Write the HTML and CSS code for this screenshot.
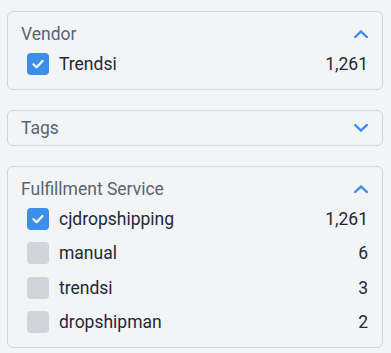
FILE: index.html
```html
<!DOCTYPE html>
<html lang="en">
<head>
    <meta charset="UTF-8">
    <meta name="viewport" content="width=device-width, initial-scale=1.0">
    <title>Filters</title>
    <link rel="stylesheet" href="styles.css">
</head>
<body>
    <div class="filters">
        <div class="card open">
            <div class="card-header">
                <span class="title">Vendor</span>
                <svg class="chevron" viewBox="0 0 14 8"><path d="M1.2 7 L7 1.5 L12.8 7"/></svg>
            </div>
            <ul class="options">
                <li><span class="box checked"><svg viewBox="0 0 22 22"><path d="M6.5 11.2 L9.6 14.2 L15.5 8"/></svg></span><span class="label">Trendsi</span><span class="count">1,261</span></li>
            </ul>
        </div>

        <div class="card">
            <div class="card-header">
                <span class="title">Tags</span>
                <svg class="chevron" viewBox="0 0 14 8"><path d="M1.2 1 L7 6.5 L12.8 1"/></svg>
            </div>
        </div>

        <div class="card open">
            <div class="card-header">
                <span class="title">Fulfillment Service</span>
                <svg class="chevron" viewBox="0 0 14 8"><path d="M1.2 7 L7 1.5 L12.8 7"/></svg>
            </div>
            <ul class="options">
                <li><span class="box checked"><svg viewBox="0 0 22 22"><path d="M6.5 11.2 L9.6 14.2 L15.5 8"/></svg></span><span class="label">cjdropshipping</span><span class="count">1,261</span></li>
                <li><span class="box"></span><span class="label">manual</span><span class="count">6</span></li>
                <li><span class="box"></span><span class="label">trendsi</span><span class="count">3</span></li>
                <li><span class="box"></span><span class="label">dropshipman</span><span class="count">2</span></li>
            </ul>
        </div>
    </div>
</body>
</html>
```

FILE: styles.css
```css
body {
    font-family: Roboto, "Noto Sans", sans-serif;
    margin: 0;
    background-color: #f3f4f6;
    color: #1f2937;
}
.filters {
    display: flex;
    flex-direction: column;
    gap: 20px;
    padding: 11px 8px 0 7px;
}
.card {
    border: 1px solid #d1d5db;
    border-radius: 6px;
    padding: 5px 14px 5px 13px;
}
.card.open {
    padding-top: 10px;
    padding-bottom: 7px;
}
.card-header {
    display: flex;
    align-items: center;
    justify-content: space-between;
    height: 24px;
}
.title {
    font-size: 17.5px;
    color: #5b6472;
}
.chevron {
    width: 14px;
    height: 8px;
    fill: none;
    stroke: #3b8fea;
    stroke-width: 2.4;
    stroke-linecap: square;
}
.options {
    list-style: none;
    margin: 1px 0 0;
    padding: 0 0 0 6px;
}
.options li {
    display: flex;
    align-items: center;
    height: 34.5px;
    font-size: 17.5px;
}
.box {
    width: 22px;
    height: 22px;
    border-radius: 4px;
    background-color: #d1d5db;
    margin-right: 10px;
    flex-shrink: 0;
}
.box.checked {
    background-color: #3b8fea;
}
.box svg {
    width: 22px;
    height: 22px;
    fill: none;
    stroke: #fff;
    stroke-width: 2.2;
    stroke-linecap: round;
    stroke-linejoin: round;
}
.label {
    flex: 1;
}
.count {
    color: #1f2937;
}
```
